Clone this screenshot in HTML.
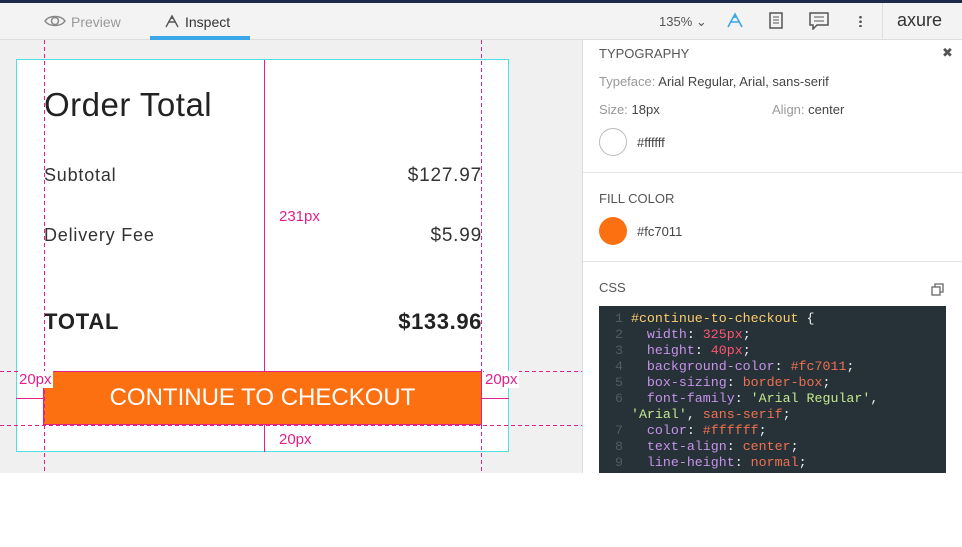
<!DOCTYPE html>
<html><head><style>
*{margin:0;padding:0;box-sizing:border-box}
body{width:962px;height:547px;background:#fff;font-family:"Liberation Sans",sans-serif;position:relative;overflow:hidden}
.a{position:absolute}
.hdr{left:0;top:0;width:962px;height:40px;background:#f3f3f3;border-top:3px solid #1c2b4a;border-bottom:1px solid #ddd}
.t{font-size:13px;color:#444}
.lbl{color:#999}
.code{font-family:"Liberation Mono",monospace;font-size:13.3px;line-height:16px;white-space:pre;color:#c792ea}
.n{color:#4f5b66}.s{color:#c3e88d}.v{color:#f07050}.r{color:#ff5370}.y{color:#ffcb6b}.w{color:#eee}
.pk{color:#e0218a;font-size:15px}
.hd{height:0;background:repeating-linear-gradient(90deg,#e0218a 0 4px,transparent 4px 7px);height:1px}
.vd{width:1px;background:repeating-linear-gradient(180deg,#e0218a 0 4px,transparent 4px 7px)}
</style></head><body>
<div class="a hdr"></div>
<svg class="a" style="left:44px;top:13px" width="22" height="16" viewBox="0 0 22 16"><path d="M1 8C5 2 17 2 21 8C17 14 5 14 1 8Z" fill="none" stroke="#888" stroke-width="1.5"/><circle cx="11" cy="8" r="3.5" fill="none" stroke="#888" stroke-width="1.5"/></svg>
<div class="a t" style="left:71px;top:14px;color:#999;font-size:14px">Preview</div>
<svg class="a" style="left:164px;top:14px" width="16" height="14"><path d="M2 13L8 2L14 13M4 8h8M8 2v3" fill="none" stroke="#555" stroke-width="1.4"/></svg>
<div class="a t" style="left:185px;top:14px;font-size:14px;color:#333">Inspect</div>
<div class="a" style="left:150px;top:36px;width:100px;height:4px;background:#3ba6e8"></div>
<div class="a t" style="left:659px;top:14px;color:#555">135% ⌄</div>
<svg class="a" style="left:726px;top:12px" width="18" height="16"><path d="M2 15L9 2L16 15M4 10h10M9 2v4" fill="none" stroke="#3ba6e8" stroke-width="1.6"/></svg>
<svg class="a" style="left:769px;top:12px" width="14" height="17"><rect x="1" y="1" width="12" height="15" fill="none" stroke="#555" stroke-width="1.5"/><path d="M4 5h6M4 8h6M4 11h6" stroke="#555"/></svg>
<svg class="a" style="left:809px;top:12px" width="20" height="18"><path d="M1 1h18v12H8l-4 4v-4H1Z" fill="none" stroke="#555" stroke-width="1.5"/><path d="M5 5h10M5 9h10" stroke="#555"/></svg>
<div class="a" style="left:859px;top:15px;width:3px;height:12px;background:radial-gradient(circle,#555 1.2px,transparent 1.5px) 0 0/3px 4.5px"></div>
<div class="a" style="left:882px;top:3px;width:1px;height:37px;background:#ddd"></div>
<div class="a" style="left:897px;top:10px;font-size:18px;color:#333">axure</div>

<div class="a" style="left:0;top:40px;width:583px;height:433px;background:#f0f0f0"></div>
<div class="a" style="left:16px;top:59px;width:493px;height:393px;background:#fff;border:1.5px solid #4fe0e0"></div>
<div class="a" style="left:44px;top:86px;font-size:33px;color:#222;letter-spacing:0.5px">Order Total</div>
<div class="a" style="left:44px;top:165px;font-size:18px;color:#333;letter-spacing:0.8px">Subtotal</div>
<div class="a" style="left:44px;top:225px;font-size:18px;color:#333;letter-spacing:0.8px">Delivery Fee</div>
<div class="a" style="left:300px;width:182px;top:165px;font-size:19px;color:#333;text-align:right;letter-spacing:0.8px">$127.97</div>
<div class="a" style="left:300px;width:182px;top:225px;font-size:19px;color:#333;text-align:right;letter-spacing:0.8px">$5.99</div>
<div class="a" style="left:44px;top:309px;font-size:22px;font-weight:bold;color:#222;letter-spacing:0.8px">TOTAL</div>
<div class="a" style="left:300px;width:182px;top:309px;font-size:22px;font-weight:bold;color:#222;text-align:right;letter-spacing:0.6px">$133.96</div>
<div class="a" style="left:43px;top:371px;width:439px;height:54px;background:#fc7011;border:1.5px solid #e0218a;color:#fff;font-size:24px;text-align:center;line-height:51px">CONTINUE TO CHECKOUT</div>
<div class="a vd" style="left:44px;top:40px;height:433px"></div>
<div class="a vd" style="left:481px;top:40px;height:433px"></div>
<div class="a hd" style="left:0;top:371px;width:583px"></div>
<div class="a hd" style="left:0;top:425px;width:583px"></div>
<div class="a" style="left:264px;top:60px;height:311px;border-left:1.5px solid #e0218a"></div>
<div class="a" style="left:264px;top:425px;height:27px;border-left:1.5px solid #e0218a"></div>
<div class="a" style="left:16px;top:398px;width:28px;border-top:1.5px solid #e0218a"></div>
<div class="a" style="left:481px;top:398px;width:28px;border-top:1.5px solid #e0218a"></div>
<div class="a pk" style="left:279px;top:208px;background:#fff">231px</div>
<div class="a pk" style="left:18px;top:371px;background:#fff;padding:0 1px">20px</div>
<div class="a pk" style="left:484px;top:371px;background:#fff;padding:0 1px">20px</div>
<div class="a pk" style="left:279px;top:431px;background:#fff">20px</div>

<div class="a" style="left:582px;top:40px;width:1px;height:433px;background:#ddd"></div>
<div class="a t" style="left:599px;top:46px;color:#555">TYPOGRAPHY</div>
<div class="a" style="left:942px;top:45px;font-size:13px;color:#555">✖</div>
<div class="a t" style="left:599px;top:74px"><span class="lbl">Typeface:</span> Arial Regular, Arial, sans-serif</div>
<div class="a t" style="left:599px;top:102px"><span class="lbl">Size:</span> 18px</div>
<div class="a t" style="left:772px;top:102px"><span class="lbl">Align:</span> center</div>
<div class="a" style="left:599px;top:128px;width:28px;height:28px;border-radius:50%;border:1.5px solid #bbb"></div>
<div class="a t" style="left:637px;top:135px">#ffffff</div>
<div class="a" style="left:583px;top:172px;width:379px;height:1px;background:#e3e3e3"></div>
<div class="a t" style="left:599px;top:191px;color:#555">FILL COLOR</div>
<div class="a" style="left:599px;top:217px;width:28px;height:28px;border-radius:50%;background:#fc7011"></div>
<div class="a t" style="left:637px;top:224px">#fc7011</div>
<div class="a" style="left:583px;top:261px;width:379px;height:1px;background:#e3e3e3"></div>
<div class="a t" style="left:599px;top:280px;color:#555">CSS</div>
<svg class="a" style="left:931px;top:283px" width="13" height="13"><rect x="1" y="4" width="8" height="8" fill="none" stroke="#666" stroke-width="1.3"/><path d="M4 4V1h8v8H9" fill="none" stroke="#666" stroke-width="1.3"/></svg>
<div class="a code" style="left:599px;top:306px;width:347px;height:167px;background:#263238;padding:5px 0 0 16px;overflow:hidden"><span class="n">1</span> <span class="y">#continue-to-checkout</span> <span class="w">{</span>
<span class="n">2</span>   width<span class="w">:</span> <span class="r">325px</span><span class="w">;</span>
<span class="n">3</span>   height<span class="w">:</span> <span class="r">40px</span><span class="w">;</span>
<span class="n">4</span>   background-color<span class="w">:</span> <span class="v">#fc7011</span><span class="w">;</span>
<span class="n">5</span>   box-sizing<span class="w">:</span> <span class="v">border-box</span><span class="w">;</span>
<span class="n">6</span>   font-family<span class="w">:</span> <span class="s">'Arial Regular'</span><span class="w">,</span>
  <span class="s">'Arial'</span><span class="w">,</span> <span class="v">sans-serif</span><span class="w">;</span>
<span class="n">7</span>   color<span class="w">:</span> <span class="v">#ffffff</span><span class="w">;</span>
<span class="n">8</span>   text-align<span class="w">:</span> <span class="v">center</span><span class="w">;</span>
<span class="n">9</span>   line-height<span class="w">:</span> <span class="v">normal</span><span class="w">;</span></div>
</body></html>
